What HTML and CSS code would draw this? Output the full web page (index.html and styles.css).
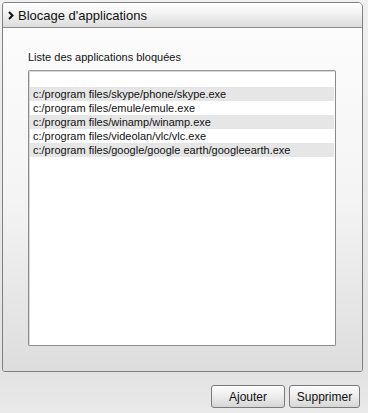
FILE: index.html
```html
<!DOCTYPE html>
<html lang="fr">
<head>
  <meta charset="UTF-8" />
  <title>Blocage d'applications</title>
  <link rel="stylesheet" href="styles.css">
</head>
<body>
  <div class="page">
    <div class="panel">
      <div class="panel-header">
        <svg class="chevron" width="6" height="9" viewBox="0 0 6 9">
          <polyline points="1,1 4.5,4.5 1,8" fill="none" stroke="#111" stroke-width="2" />
        </svg>
        <span>Blocage d'applications</span>
      </div>
      <div class="panel-body">
        <div class="list-label">Liste des applications bloquées</div>
        <div class="app-list">
          <div class="app-row">c:/program files/skype/phone/skype.exe</div>
          <div class="app-row">c:/program files/emule/emule.exe</div>
          <div class="app-row">c:/program files/winamp/winamp.exe</div>
          <div class="app-row">c:/program files/videolan/vlc/vlc.exe</div>
          <div class="app-row">c:/program files/google/google earth/googleearth.exe</div>
        </div>
      </div>
    </div>
    <div class="actions">
      <button class="btn">Ajouter</button>
      <button class="btn">Supprimer</button>
    </div>
  </div>
</body>
</html>
```

FILE: styles.css
```css
body {
  margin: 0;
  font-family: "Liberation Sans", Arial, sans-serif;
  color: #111;
  background: linear-gradient(#f0f0f0, #e2e2e2 370px, #eaeaea);
  height: 413px;
  overflow: hidden;
}
.page {
  padding: 2px 5px 0 2px;
}
.panel {
  border: 1px solid #808080;
  border-radius: 3px 5px 3px 3px;
  overflow: hidden;
}
.panel-header {
  height: 24px;
  display: flex;
  align-items: center;
  gap: 4px;
  padding-left: 5px;
  font-size: 13px;
  background: linear-gradient(#ffffff, #f4f4f4 40%, #dcdcdc);
  border-bottom: 1px solid #8a8a8a;
}
.chevron {
  margin-top: 1px;
}
.panel-body {
  height: 343px;
  box-sizing: border-box;
  padding: 23px 26px 0 25px;
  background: linear-gradient(#fcfcfc, #f4f4f4 50%, #dddddd);
}
.list-label {
  font-size: 11px;
  height: 16px;
}
.app-list {
  height: 276px;
  box-sizing: border-box;
  margin-top: 3px;
  padding: 16px 1px 0 1px;
  background: #fff;
  border: 1px solid #8c8c8c;
  border-top-color: #9a9a9a;
  border-radius: 2px;
  box-shadow: inset 1px 1px 0 #d8d8d8;
}
.app-row {
  height: 14px;
  line-height: 14px;
  padding-left: 3px;
  font-size: 11px;
}
.app-row:nth-child(odd) {
  background: #e6e6e6;
}
.actions {
  display: flex;
  justify-content: flex-end;
  gap: 4px;
  padding: 13px 3px 0 0;
}
.btn {
  height: 23px;
  padding: 0;
  font-family: "Liberation Sans", Arial, sans-serif;
  font-size: 12px;
  color: #111;
  background: linear-gradient(#fdfdfd, #ececec 50%, #d6d6d6);
  border: 1px solid #7a7a7a;
  border-radius: 3px;
}
.btn:first-child {
  width: 74px;
}
.btn:last-child {
  width: 71px;
}
```
